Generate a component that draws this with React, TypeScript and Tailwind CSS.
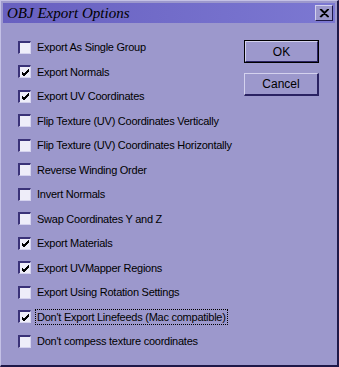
import React from 'react';

const options: [string, boolean][] = [
  ['Export As Single Group', false],
  ['Export Normals', true],
  ['Export UV Coordinates', true],
  ['Flip Texture (UV) Coordinates Vertically', false],
  ['Flip Texture (UV) Coordinates Horizontally', false],
  ['Reverse Winding Order', false],
  ['Invert Normals', false],
  ['Swap Coordinates Y and Z', false],
  ['Export Materials', true],
  ['Export UVMapper Regions', true],
  ['Export Using Rotation Settings', false],
  ["Don't Export Linefeeds (Mac compatible)", true],
  ["Don't compess texture coordinates", false],
];

const Check = ({ on }: { on: boolean }) => (
  <div className='w-[13px] h-[13px] border-t-2 border-l-2 border-t-[#3a3278] border-l-[#3a3278] border-b border-r border-b-[#d4d2ee] border-r-[#d4d2ee] bg-[#eeedf9] flex items-center justify-center shrink-0'>
    {on && (
      <svg width='9' height='9' viewBox='0 0 9 9'>
        <path d='M1 4 L3 6 L8 1 M1 5 L3 7 L8 2 M1 6 L3 8 L8 3' stroke='#000' strokeWidth='1' fill='none' />
      </svg>
    )}
  </div>
);

const App: React.FC = () => {
  return (
    <main className='w-[339px] h-[367px] bg-[#9c98cc] border-t border-l border-t-[#c4c1e6] border-l-[#c4c1e6] border-b-2 border-r-2 border-b-[#1e1848] border-r-[#1e1848] p-[2px] flex flex-col' style={{ fontFamily: '"Liberation Sans", Arial, sans-serif' }}>
      {/* Title bar */}
      <div className='h-[20px] bg-gradient-to-r from-[#6860c0] to-[#7c78d2] flex items-center justify-between pl-[4px] pr-[2px]'>
        <span className='italic text-[15px] text-black leading-none' style={{ fontFamily: '"Liberation Serif", "Times New Roman", serif' }}>OBJ Export Options</span>
        <div className='w-[18px] h-[16px] bg-[#9c98cc] border-t border-l border-t-[#d4d2ee] border-l-[#d4d2ee] border-b border-r border-b-[#1e1848] border-r-[#1e1848] flex items-center justify-center'>
          <svg width='10' height='9' viewBox='0 0 10 9'>
            <path d='M1 0 L9 8 M2 0 L10 8 M9 0 L1 8 M10 0 L2 8' stroke='#000' strokeWidth='1.2' fill='none' />
          </svg>
        </div>
      </div>

      <div className='flex flex-1'>
        <div className='flex flex-col pt-[12px] pl-[15px] w-[238px]'>
          {options.map(([label, on], i) => (
            <div key={i} className='h-[24.5px] flex items-center gap-[5px] text-[11px] tracking-[-0.25px] text-black whitespace-nowrap'>
              <Check on={on} />
              <span className={i === 11 ? 'outline outline-1 outline-dotted outline-black px-[1px] leading-[14px]' : 'px-[1px]'}>{label}</span>
            </div>
          ))}
        </div>
        <div className='flex flex-col pt-[17px] pl-[3px] gap-[10px]'>
          <button className='w-[75px] h-[23px] border border-black bg-[#9c98cc] text-[12px] text-black'>
            <div className='w-full h-full border-t border-l border-t-[#d4d2ee] border-l-[#d4d2ee] border-b border-r border-b-[#2a2262] border-r-[#2a2262] flex items-center justify-center'>OK</div>
          </button>
          <button className='w-[75px] h-[23px] bg-[#9c98cc] border-t border-l border-t-[#d4d2ee] border-l-[#d4d2ee] border-b-2 border-r-2 border-b-[#2a2262] border-r-[#2a2262] text-[12px] text-black flex items-center justify-center'>Cancel</button>
        </div>
      </div>
    </main>
  );
};

export default App;
